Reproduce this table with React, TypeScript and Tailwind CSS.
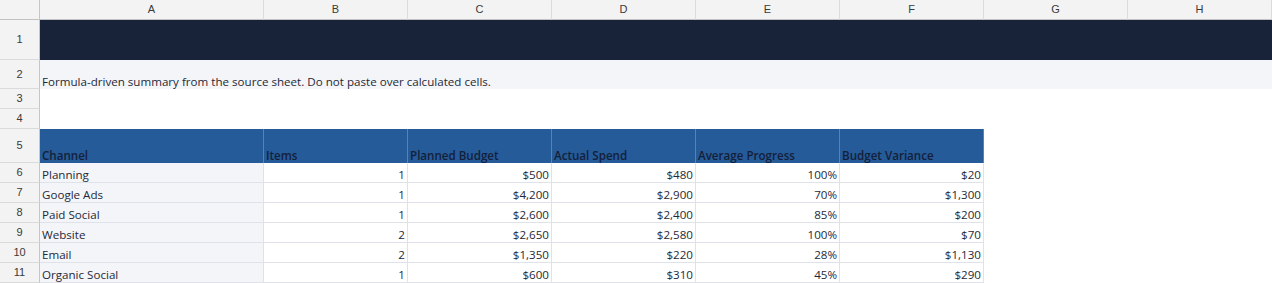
const COLS = ['A', 'B', 'C', 'D', 'E', 'F', 'G', 'H']
const HEADERS = ['Channel', 'Items', 'Planned Budget', 'Actual Spend', 'Average Progress', 'Budget Variance']

const ROWS = [
  ['Planning', '1', '$500', '$480', '100%', '$20'],
  ['Google Ads', '1', '$4,200', '$2,900', '70%', '$1,300'],
  ['Paid Social', '1', '$2,600', '$2,400', '85%', '$200'],
  ['Website', '2', '$2,650', '$2,580', '100%', '$70'],
  ['Email', '2', '$1,350', '$220', '28%', '$1,130'],
  ['Organic Social', '1', '$600', '$310', '45%', '$290'],
]

const cellFont = "font-['Open_Sans','Noto_Sans',sans-serif] text-[11.6px] leading-[15px]"

function RowHead({ n }: { n: number }) {
  return (
    <div className="flex items-center justify-center bg-[#f3f3f3] border-r border-b border-r-[#c6c6c6] border-b-[#dadada] text-[11px] text-[#3a3a3a] font-['Liberation_Sans',Arial,sans-serif]">
      {n}
    </div>
  )
}

export default function App() {
  return (
    <div className="w-[1272px] h-[283px] overflow-hidden bg-white">
      <div className="grid grid-cols-[40px_224px_repeat(7,144px)] grid-rows-[20px_40px_29px_20px_20px_34px_repeat(6,20px)]">
        {/* column letters */}
        <div className="bg-[#f3f3f3] border-r border-b border-r-[#c6c6c6] border-b-[#c2c2c2]" />
        {COLS.map((c) => (
          <div
            key={c}
            className="flex items-center justify-center bg-[#f3f3f3] border-r border-b border-r-[#dcdcdc] border-b-[#c2c2c2] text-[11px] text-[#3a3a3a] font-['Liberation_Sans',Arial,sans-serif]"
          >
            {c}
          </div>
        ))}

        {/* title band */}
        <RowHead n={1} />
        <div className="col-span-8 bg-[#18233a]" />

        {/* note */}
        <RowHead n={2} />
        <div className={`col-span-8 bg-[#f4f5f9] flex items-end px-[2px] text-[#1f2937] ${cellFont}`}>
          Formula-driven summary from the source sheet. Do not paste over calculated cells.
        </div>

        <RowHead n={3} />
        <div className="col-span-8 bg-white" />
        <RowHead n={4} />
        <div className="col-span-8 bg-white" />

        {/* table header */}
        <RowHead n={5} />
        {HEADERS.map((h) => (
          <div
            key={h}
            className={`flex items-end bg-[#255b99] border-r border-[#5a82b4] px-[2px] font-semibold text-[#14203a] ${cellFont}`}
          >
            {h}
          </div>
        ))}
        <div className="col-span-2 bg-white" />

        {/* data rows */}
        {ROWS.map((row, i) => (
          <div key={row[0]} className="contents">
            <RowHead n={i + 6} />
            {row.map((v, j) => (
              <div
                key={j}
                className={`flex items-end border-r border-b border-[#dfe2ea] px-[2px] text-[#1f2937] ${cellFont} ${
                  j === 0 ? 'bg-[#f4f5f9] justify-start' : 'bg-white justify-end'
                }`}
              >
                {v}
              </div>
            ))}
            <div className="col-span-2 bg-white" />
          </div>
        ))}
      </div>
    </div>
  )
}
